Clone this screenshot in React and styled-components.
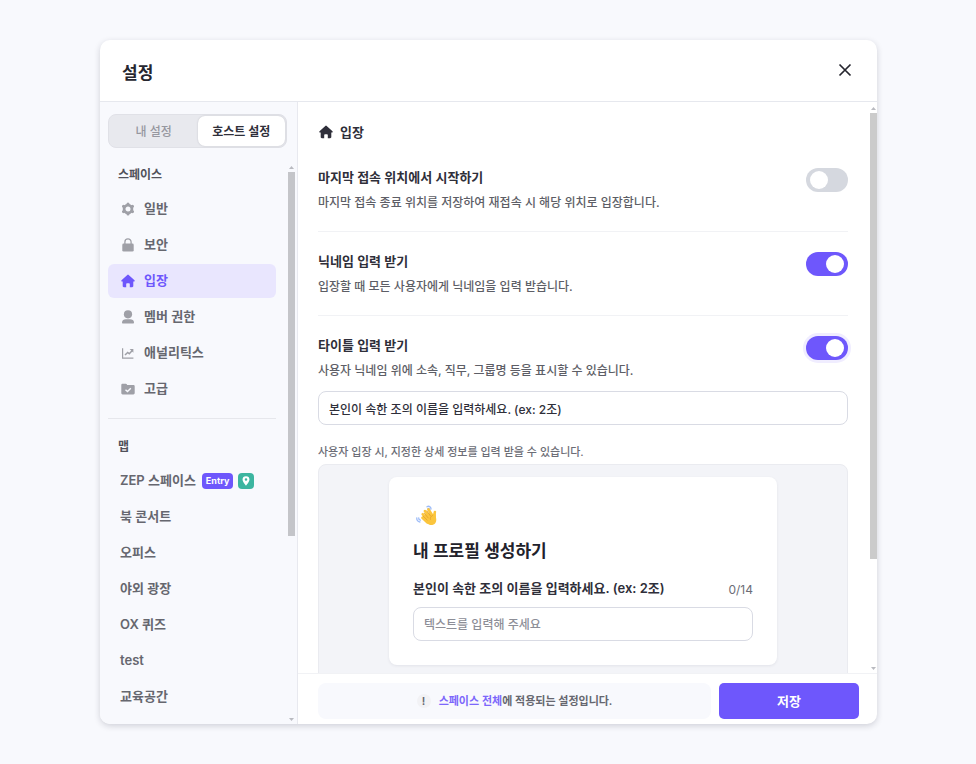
import React, { useState } from 'react'
import styled, { createGlobalStyle, css } from 'styled-components'

const GlobalStyle = createGlobalStyle`
    * {
        box-sizing: border-box;
    }

    body {
        margin: 0;
        background: #f8f9fd;
        color: #2f2f3a;
        font-family: Inter, "Noto Sans CJK KR", sans-serif;
        font-size: 13px;
        line-height: 20px;
    }

    button, input {
        font-family: inherit;
    }

    h1, h2, h3, p, ul {
        margin: 0;
        padding: 0;
    }
`

const Page = styled.div`
    height: 100vh;
    display: flex;
    padding: 40px 99px 40px 100px;
`

const Modal = styled.section`
    flex: 1;
    min-width: 0;
    display: flex;
    flex-direction: column;
    background: #fff;
    border-radius: 10px;
    box-shadow: 0 2px 6px rgba(30,30,50,0.18);
    overflow: hidden;
`

const ModalHeader = styled.header`
    display: flex;
    flex: none;
    justify-content: space-between;
    align-items: center;
    height: 62px;
    padding: 4px 22px 0;
    border-bottom: 1px solid #e6e8ee;
`

const ModalTitle = styled.h1`
    font-size: 17px;
    font-weight: 600;
    line-height: 24px;
    color: #26262f;
`

const CloseButton = styled.button`
    display: flex;
    align-items: center;
    justify-content: center;
    width: 20px;
    height: 24px;
    padding: 0 0 6px;
    border: none;
    background: none;
    color: #26262f;
    cursor: pointer;
`

const ModalBody = styled.div`
    flex: 1;
    min-height: 0;
    display: flex;
`

const Sidebar = styled.aside`
    flex: none;
    display: flex;
    flex-direction: column;
    width: 198px;
    padding: 12px 2px 0 8px;
    background: #f8f9fd;
    border-right: 1px solid #e8e9ef;
`

const Tabs = styled.div`
    flex: none;
    display: flex;
    height: 34px;
    margin: 0 8px 15px 0;
    padding: 1px;
    border: 1px solid #e0e1e7;
    border-radius: 8px;
    background: #e8e9ee;
`

const Tab = styled.button`
    flex: 1;
    padding: 0 0 2px;
    border: none;
    border-radius: 7px;
    background: ${({ $active }) => ($active ? '#fff' : 'transparent')};
    box-shadow: ${({ $active }) => ($active ? '0 0 2px rgba(40,40,60,0.2)' : 'none')};
    color: ${({ $active }) => ($active ? '#2f2f3a' : '#96979f')};
    font-size: 12px;
    font-weight: ${({ $active }) => ($active ? 600 : 500)};
    cursor: pointer;
`

const SidebarScroll = styled.div`
    flex: 1;
    min-height: 0;
    display: flex;
    gap: 12px;
`

const Nav = styled.nav`
    flex: 1;
    overflow: hidden;
`

const NavTitle = styled.h2`
    padding: 2px 10px 7px;
    font-size: 12px;
    font-weight: 600;
    color: #50515a;
`

const NavList = styled.ul`
    display: flex;
    flex-direction: column;
    gap: 2px;
    list-style: none;
`

const NavLink = styled.a`
    display: flex;
    align-items: center;
    height: 34px;
    padding: 0 12px;
    border-radius: 6px;
    color: #66676f;
    font-weight: 600;
    text-decoration: none;

    svg {
        flex: none;
        margin-right: 8px;
        color: #9fa0a7;
    }

    ${({ $active }) => $active && css`
        background: #e9e6fe;
        color: #6e57fc;

        svg {
            color: #6e57fc;
        }
    `}
`

const NavText = styled.span`
    padding-bottom: 2px;
`

const NavDivider = styled.hr`
    margin: 12px 0 16px;
    border: none;
    border-top: 1px solid #e6e7ec;
`

const EntryBadge = styled.span`
    margin-left: 6px;
    padding: 0 4px;
    border-radius: 4px;
    background: #6e57fc;
    color: #fff;
    font-size: 9px;
    font-weight: 700;
    line-height: 16px;
`

const PinBadge = styled.span`
    display: flex;
    align-items: center;
    justify-content: center;
    width: 16px;
    height: 16px;
    margin-left: 5px;
    border-radius: 4px;
    background: #3cb5a0;

    svg {
        margin: 0;
        color: #fff;
    }
`

const Scrollbar = styled.div`
    flex: none;
    display: flex;
    flex-direction: column;
    width: 7px;
    padding: ${({ $top }) => $top}px 0 3px;
    color: #b9bac0;

    svg {
        flex: none;
        display: block;
    }
`

const Track = styled.div`
    flex: 1;
    margin: 3px 0;
`

const Thumb = styled.div`
    height: ${({ $size }) => $size}%;
    background: ${({ $color }) => $color};
`

const Main = styled.main`
    flex: 1;
    min-width: 0;
    display: flex;
    flex-direction: column;
`

const MainScroll = styled.div`
    flex: 1;
    min-height: 0;
    display: flex;
`

const Content = styled.div`
    flex: 1;
    min-width: 0;
    padding: 20px 22px 0 20px;
    overflow: hidden;
`

const ContentTitle = styled.h2`
    display: flex;
    align-items: center;
    gap: 6px;
    margin-bottom: 25px;
    font-size: 13px;
    font-weight: 600;
`

const Setting = styled.div`
    display: flex;
    justify-content: space-between;
    align-items: flex-start;
    height: ${({ $last }) => ($last ? '46px' : '65px')};
    margin-bottom: ${({ $last }) => ($last ? '10px' : '19px')};
    border-bottom: ${({ $last }) => ($last ? 'none' : '1px solid #f1f2f5')};
`

const SettingTitle = styled.label`
    display: block;
    margin-bottom: 6px;
    color: #2f2f3a;
    font-weight: 600;
`

const SettingText = styled.p`
    color: #5d5e66;
    font-size: 12px;
    font-weight: 500;
`

const Toggle = styled.input`
    appearance: none;
    flex: none;
    display: flex;
    align-items: center;
    width: 42px;
    height: 24px;
    margin: 1px 0 0;
    padding: 0 4px;
    border-radius: 12px;
    background: #d5d8df;
    box-shadow: ${({ $halo }) => ($halo ? '0 0 0 3px #f0edff' : 'none')};
    cursor: pointer;

    &::before {
        content: "";
        width: 18px;
        height: 18px;
        border-radius: 50%;
        background: #fff;
    }

    &:checked {
        justify-content: flex-end;
        background: #6e57fc;
    }
`

const TextInput = styled.input`
    display: block;
    width: 100%;
    height: 34px;
    padding: 0 10px;
    border: 1px solid #d9dbe4;
    border-radius: 8px;
    background: #fff;
    color: #2f2f3a;
    font-size: 12px;
    font-weight: 500;
    outline: none;

    &::placeholder {
        color: #8d8e97;
        opacity: 1;
    }
`

const Hint = styled.p`
    margin: 17px 0 2px;
    color: #6c6d76;
    font-size: 11px;
    font-weight: 500;
`

const Preview = styled.div`
    display: flex;
    justify-content: center;
    padding: 12px 12px 24px;
    border: 1px solid #eaebf0;
    border-radius: 8px;
    background: #f3f4f8;
`

const ProfileCard = styled.div`
    flex: 0 1 388px;
    padding: 24px;
    border-radius: 8px;
    background: #fff;
    box-shadow: 0 1px 3px rgba(40,40,70,0.08);

    > svg {
        display: block;
        margin: 3px 0 10px 2px;
    }
`

const ProfileTitle = styled.h3`
    margin-bottom: 14px;
    color: #22222b;
    font-size: 17px;
    font-weight: 600;
    line-height: 26px;
`

const FieldHead = styled.div`
    display: flex;
    justify-content: space-between;
    height: 20px;
    margin-bottom: 9px;
    font-weight: 600;
`

const Counter = styled.span`
    color: #6c6d76;
    font-size: 12px;
    font-weight: 400;
    line-height: 24px;
`

const Footer = styled.footer`
    flex: none;
    display: flex;
    gap: 8px;
    padding: 9px 18px 5px 20px;
    border-top: 1px solid #f1f2f5;
`

const Notice = styled.p`
    flex: 1;
    display: flex;
    justify-content: center;
    align-items: center;
    gap: 8px;
    border-radius: 8px;
    background: #f8f9fd;
    color: #66676f;
    font-size: 11px;
    font-weight: 600;

    b {
        color: #7c67fb;
        font-weight: 600;
    }
`

const NoticeMark = styled.span`
    width: 14px;
    height: 14px;
    border-radius: 50%;
    background: #f2f2f5;
    line-height: 14px;
    text-align: center;
`

const SaveButton = styled.button`
    width: 140px;
    height: 36px;
    padding: 0 0 2px;
    border: none;
    border-radius: 5px;
    background: #6e57fc;
    color: #fff;
    font-size: 13px;
    font-weight: 700;
    cursor: pointer;
`

const Icon = ({ children, size = 16 }) => (
    <svg width={size} height={size} viewBox="0 0 16 16" fill="currentColor" aria-hidden="true">
        {children}
    </svg>
)

const GearIcon = () => (
    <Icon>
        <circle cx="8" cy="8" r="3.9" fill="none" stroke="currentColor" strokeWidth="2.8" />
        <path
            d="M8 3.2v-.3M8 12.8v.3M3.800 5.600l-.3-.2M12.200 10.400l.3.2M3.800 10.400l-.3.2M12.200 5.600l.3-.2"
            stroke="currentColor"
            strokeWidth="3"
            strokeLinecap="round"
        />
    </Icon>
)

const LockIcon = () => (
    <Icon>
        <rect x="2.3" y="6.6" width="11.4" height="8" rx="1.4" />
        <path d="M4.9 7.5V5a3.1 3.1 0 0 1 6.2 0v2.5" fill="none" stroke="currentColor" strokeWidth="1.3" />
    </Icon>
)

const HomeIcon = () => (
    <Icon>
        <path d="M7.3 1.9a1 1 0 0 1 1.4 0l5.8 5.3c.5.5.2 1.3-.5 1.3h-.7V13c0 .7-.5 1.2-1.2 1.2H9.8v-3.1c0-.5-.3-.8-.8-.8H7c-.5 0-.8.3-.8.8v3.1H3.9c-.7 0-1.2-.5-1.2-1.2V8.5H2c-.7 0-1-.8-.5-1.3z" />
    </Icon>
)

const MemberIcon = () => (
    <Icon>
        <circle cx="8" cy="5.3" r="4.1" />
        <path d="M2 13.5c0-2 1.8-3.2 3.9-3.2h4.2c2.1 0 3.9 1.2 3.9 3.2 0 .6-.4 1-1 1H3c-.6 0-1-.4-1-1z" />
    </Icon>
)

const ChartIcon = () => (
    <Icon>
        <path d="M2.6 3.2v10h10.8" fill="none" stroke="currentColor" strokeWidth="1.2" />
        <path d="M5 10l2.7-2.6L9.3 8.8l3-3.2" fill="none" stroke="currentColor" strokeWidth="1.5" />
        <path d="M9.6 4h3.8v3.8z" />
    </Icon>
)

const FolderIcon = () => (
    <Icon>
        <path d="M1.3 4c0-.8.6-1.3 1.3-1.3h3.2c.5 0 .8.2 1 .6l.4.8h6.2c.7 0 1.3.5 1.3 1.2V12c0 .8-.6 1.4-1.3 1.4H2.600c-.7 0-1.300-.6-1.300-1.400z" />
        <path d="M5.5 8.7l2 1.9 3.3-3.4" fill="none" stroke="#f8f9fd" strokeWidth="1.4" />
    </Icon>
)

const PinIcon = () => (
    <Icon size={12}>
        <path
            fillRule="evenodd"
            d="M8 1.5a4.6 4.6 0 0 0-4.6 4.6c0 3.4 4.6 8.1 4.6 8.1s4.6-4.7 4.6-8.1A4.6 4.6 0 0 0 8 1.5zM8 4.3a1.7 1.7 0 1 1 0 3.4a1.7 1.7 0 0 1 0-3.4z"
        />
    </Icon>
)

const WaveIcon = () => (
    <svg width="24" height="24" viewBox="0 0 24 24" fill="none" strokeLinecap="round" strokeLinejoin="round" aria-hidden="true">
        <path d="M12 2.800c1.800-1.300 4.100 0 4 2.200M12.800 4.700c.9-.6 1.900-.1 1.900 1" stroke="#9dbcf8" strokeWidth="1.300" />
        <path d="M1.800 13.800c-.3 2.300 1 4 3.100 4.200M3.700 14c-.1 1.200.6 2 1.700 2.200" stroke="#9dbcf8" strokeWidth="1.300" />
        <path
            d="M7.200 14.300l5.500 5.400c2.300 2.100 6 1.700 7.700-.8 1.300-2 .9-3.900.5-6l-.3-4-3.600 1.500-5-2.400z"
            fill="#fbc53d"
        />
        <path d="M7.500 13.800l5 4.600M7.800 10.300l5 5.400M10 7.100l4.700 6M13.500 5.500l4.400 7" stroke="#fbc53d" strokeWidth="2.700" />
        <path d="M19.900 8c-.8 2-.1 3.700-.5 6" stroke="#fbc53d" strokeWidth="2.600" />
        <path d="M8.300 12.300l3.800 3.700M9.300 9.200l3.900 4.700M12 6.900l3.500 5M17.500 11.500c-1.900.8-2.500 2.300-2.100 3.900" stroke="#e2a02d" strokeWidth=".8" />
    </svg>
)

const ArrowUp = () => (
    <svg width="7" height="3" viewBox="0 0 7 3" fill="currentColor" aria-hidden="true">
        <path d="M1 3l2.500-3L6 3z" />
    </svg>
)

const ArrowDown = () => (
    <svg width="7" height="3" viewBox="0 0 7 3" fill="currentColor" aria-hidden="true">
        <path d="M1 0l2.500 3L6 0z" />
    </svg>
)

const ScrollRail = ({ top, size, color }) => (
    <Scrollbar $top={top} aria-hidden="true">
        <ArrowUp />
        <Track>
            <Thumb $size={size} $color={color} />
        </Track>
        <ArrowDown />
    </Scrollbar>
)

const spaceMenu = [
    { id: 'general', label: '일반', icon: GearIcon },
    { id: 'security', label: '보안', icon: LockIcon },
    { id: 'entrance', label: '입장', icon: HomeIcon },
    { id: 'members', label: '멤버 권한', icon: MemberIcon },
    { id: 'analytics', label: '애널리틱스', icon: ChartIcon },
    { id: 'advanced', label: '고급', icon: FolderIcon },
]

const maps = [
    { label: 'ZEP 스페이스', entry: true },
    { label: '북 콘서트' },
    { label: '오피스' },
    { label: '야외 광장' },
    { label: 'OX 퀴즈' },
    { label: 'test' },
    { label: '교육공간' },
]

export default function App() {
    const [tab, setTab] = useState('host')
    const [menu, setMenu] = useState('entrance')
    const [lastPosition, setLastPosition] = useState(false)
    const [nickname, setNickname] = useState(true)
    const [useTitle, setUseTitle] = useState(true)
    const [title, setTitle] = useState('본인이 속한 조의 이름을 입력하세요. (ex: 2조)')
    const [answer, setAnswer] = useState('')

    return (
        <>
            <GlobalStyle />
            <Page>
                <Modal>
                    <ModalHeader>
                        <ModalTitle>설정</ModalTitle>
                        <CloseButton type="button" aria-label="닫기">
                            <svg width="14" height="14" viewBox="0 0 14 14" aria-hidden="true">
                                <path d="M1.500 1.500l11 11M12.500 1.500l-11 11" stroke="currentColor" strokeWidth="1.700" />
                            </svg>
                        </CloseButton>
                    </ModalHeader>
                    <ModalBody>
                        <Sidebar>
                            <Tabs>
                                <Tab type="button" $active={tab === 'my'} onClick={() => setTab('my')}>내 설정</Tab>
                                <Tab type="button" $active={tab === 'host'} onClick={() => setTab('host')}>호스트 설정</Tab>
                            </Tabs>
                            <SidebarScroll>
                                <Nav>
                                    <NavTitle>스페이스</NavTitle>
                                    <NavList>
                                        {spaceMenu.map(({ id, label, icon: MenuIcon }) => (
                                            <li key={id}>
                                                <NavLink href={`#${id}`} $active={menu === id} onClick={() => setMenu(id)}>
                                                    <MenuIcon />
                                                    <NavText>{label}</NavText>
                                                </NavLink>
                                            </li>
                                        ))}
                                    </NavList>
                                    <NavDivider />
                                    <NavTitle>맵</NavTitle>
                                    <NavList>
                                        {maps.map(({ label, entry }) => (
                                            <li key={label}>
                                                <NavLink href="#map">
                                                    <NavText>{label}</NavText>
                                                    {entry && (
                                                        <>
                                                            <EntryBadge>Entry</EntryBadge>
                                                            <PinBadge><PinIcon /></PinBadge>
                                                        </>
                                                    )}
                                                </NavLink>
                                            </li>
                                        ))}
                                    </NavList>
                                </Nav>
                                <ScrollRail top={3} size={67} color="#c4c5c9" />
                            </SidebarScroll>
                        </Sidebar>
                        <Main>
                            <MainScroll>
                                <Content>
                                    <ContentTitle><HomeIcon />입장</ContentTitle>
                                    <Setting>
                                        <div>
                                            <SettingTitle htmlFor="last-position">마지막 접속 위치에서 시작하기</SettingTitle>
                                            <SettingText>마지막 접속 종료 위치를 저장하여 재접속 시 해당 위치로 입장합니다.</SettingText>
                                        </div>
                                        <Toggle
                                            id="last-position"
                                            type="checkbox"
                                            checked={lastPosition}
                                            onChange={e => setLastPosition(e.target.checked)}
                                        />
                                    </Setting>
                                    <Setting>
                                        <div>
                                            <SettingTitle htmlFor="nickname">닉네임 입력 받기</SettingTitle>
                                            <SettingText>입장할 때 모든 사용자에게 닉네임을 입력 받습니다.</SettingText>
                                        </div>
                                        <Toggle
                                            id="nickname"
                                            type="checkbox"
                                            checked={nickname}
                                            onChange={e => setNickname(e.target.checked)}
                                        />
                                    </Setting>
                                    <Setting $last>
                                        <div>
                                            <SettingTitle htmlFor="use-title">타이틀 입력 받기</SettingTitle>
                                            <SettingText>사용자 닉네임 위에 소속, 직무, 그룹명 등을 표시할 수 있습니다.</SettingText>
                                        </div>
                                        <Toggle
                                            id="use-title"
                                            type="checkbox"
                                            $halo
                                            checked={useTitle}
                                            onChange={e => setUseTitle(e.target.checked)}
                                        />
                                    </Setting>
                                    <TextInput
                                        type="text"
                                        aria-label="타이틀"
                                        value={title}
                                        onChange={e => setTitle(e.target.value)}
                                    />
                                    <Hint>사용자 입장 시, 지정한 상세 정보를 입력 받을 수 있습니다.</Hint>
                                    <Preview>
                                        <ProfileCard>
                                            <WaveIcon />
                                            <ProfileTitle>내 프로필 생성하기</ProfileTitle>
                                            <FieldHead>
                                                <label htmlFor="answer">{title}</label>
                                                <Counter>{answer.length}/14</Counter>
                                            </FieldHead>
                                            <TextInput
                                                id="answer"
                                                type="text"
                                                maxLength={14}
                                                placeholder="텍스트를 입력해 주세요"
                                                value={answer}
                                                onChange={e => setAnswer(e.target.value)}
                                            />
                                        </ProfileCard>
                                    </Preview>
                                </Content>
                                <ScrollRail top={5} size={81} color="#cbcbcb" />
                            </MainScroll>
                            <Footer>
                                <Notice>
                                    <NoticeMark>!</NoticeMark>
                                    <span><b>스페이스 전체</b>에 적용되는 설정입니다.</span>
                                </Notice>
                                <SaveButton type="button">저장</SaveButton>
                            </Footer>
                        </Main>
                    </ModalBody>
                </Modal>
            </Page>
        </>
    )
}
